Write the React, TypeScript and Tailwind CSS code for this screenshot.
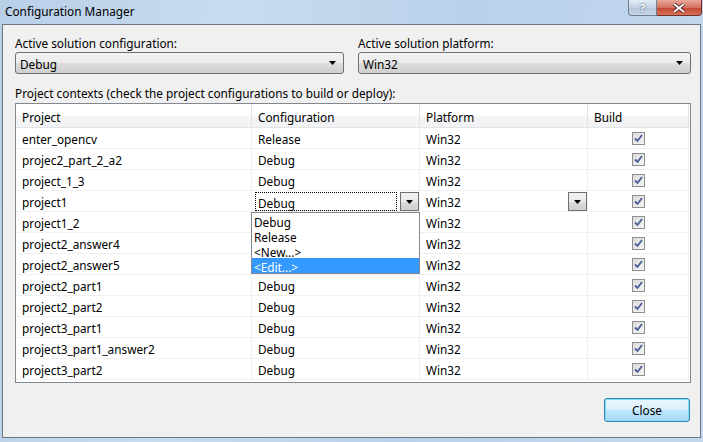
import React from "react";

const rows = [
  { name: "enter_opencv", config: "Release" },
  { name: "projec2_part_2_a2", config: "Debug" },
  { name: "project_1_3", config: "Debug" },
  { name: "project1", config: "Debug", open: true },
  { name: "project1_2", config: "Debug" },
  { name: "project2_answer4", config: "Debug" },
  { name: "project2_answer5", config: "Debug" },
  { name: "project2_part1", config: "Debug" },
  { name: "project2_part2", config: "Debug" },
  { name: "project3_part1", config: "Debug" },
  { name: "project3_part1_answer2", config: "Debug" },
  { name: "project3_part2", config: "Debug" },
];

const Arrow = () => (
  <svg width="7" height="4" viewBox="0 0 7 4">
    <path d="M0 0h7L3.5 4z" fill="#000" />
  </svg>
);

const Combo = ({ value }: { value: string }) => (
  <div className="h-[22px] rounded-[3px] border border-[#707070] bg-[linear-gradient(#f2f2f2_0%,#ebebeb_50%,#dddddd_51%,#cfcfcf_100%)] flex items-center pl-[4px] pr-[7px] justify-between">
    <span className="pt-[1px]">{value}</span>
    <Arrow />
  </div>
);

const DropBtn = () => (
  <div className="absolute top-[1px] left-[148px] w-[19px] h-[19px] border border-[#707070] bg-[linear-gradient(#f2f2f2_0%,#ebebeb_50%,#dddddd_51%,#cfcfcf_100%)] flex items-center justify-center">
    <Arrow />
  </div>
);

const Check = () => (
  <div className="w-[13px] h-[13px] border border-[#8f8f8f] bg-[linear-gradient(135deg,#dcdcdc,#f4f4f4)] flex items-center justify-center">
    <svg width="9" height="9" viewBox="0 0 9 9">
      <path d="M1 4.5l2.5 2.5L8 1" stroke="#4a5e97" strokeWidth="1.8" fill="none" />
    </svg>
  </div>
);

const cell = "h-full border-r border-b border-[#f0f0f0] flex items-center pl-[6px] pt-[2px] relative";

export default function App() {
  return (
    <div className="w-[703px] h-[442px] flex flex-col bg-[linear-gradient(100deg,#b8cfe8_0%,#c8dcf0_30%,#b9d1ea_60%,#c3d8ee_100%)] font-['Noto_Sans',sans-serif] text-[11.8px] text-black leading-[16px] overflow-hidden">
      <div className="h-[24px] flex items-start relative">
        <span className="pl-[5px] pt-[3px]">Configuration Manager</span>
        <div className="absolute right-[1px] top-0 flex">
          <div className="w-[29px] h-[16px] rounded-bl-[4px] border border-t-0 border-[#6f7f92] bg-[linear-gradient(#e3ecf5,#c4d3e3_50%,#b5c6d9_51%,#c9d8e8)] flex items-center justify-center text-[11px] font-bold text-white [text-shadow:0_0_2px_#2a3a50]">
            ?
          </div>
          <div className="w-[45px] h-[16px] rounded-br-[4px] border border-l-0 border-t-0 border-[#6f2f2a] bg-[linear-gradient(#e9a99b,#d4705e_50%,#c24632_51%,#d8705a)] flex items-center justify-center">
            <svg width="12" height="10" viewBox="0 0 12 10">
              <path d="M1 1l10 8M11 1L1 9" stroke="#3a1010" strokeWidth="3.4" />
              <path d="M1 1l10 8M11 1L1 9" stroke="#fff" strokeWidth="2" />
            </svg>
          </div>
        </div>
      </div>
      <div className="mx-[2px] h-[414px] border border-[#6b7784] bg-[#f0f0f0] pl-[12px] pt-[10px]">
        <div className="grid grid-cols-[329px_333px] gap-x-[14px]">
          <div className="h-[17px]">Active solution configuration:</div>
          <div className="h-[17px]">Active solution platform:</div>
          <Combo value="Debug" />
          <Combo value="Win32" />
        </div>
        <div className="mt-[10px] h-[16px] pt-[1px]">Project contexts (check the project configurations to build or deploy):</div>
        <div className="mt-[3px] w-[676px] h-[280px] border border-[#828790] bg-white">
          <div className="grid grid-cols-[236px_168px_168px_101px] h-[24px] bg-[linear-gradient(#ffffff_0%,#ffffff_45%,#f3f4f5_55%,#f1f2f3_100%)]">
            {["Project", "Configuration", "Platform", "Build"].map((h) => (
              <div key={h} className="h-full border-r border-b border-[#e3e4e6] flex items-center pl-[6px] pt-[3px]">
                {h}
              </div>
            ))}
          </div>
          {rows.map((r) => (
            <div key={r.name} className="grid grid-cols-[236px_168px_168px_101px] h-[21px]">
              <div className={cell}>{r.name}</div>
              <div className={cell}>
                {r.open ? (
                  <>
                    <div className="absolute left-[3px] top-[1px] w-[142px] h-[19px] border border-dotted border-black flex items-center pl-[2px] pt-[2px]">
                      {r.config}
                    </div>
                    <DropBtn />
                    <div className="absolute left-[-1px] top-[21px] w-[169px] h-[62px] border border-[#828790] bg-white z-10 flex flex-col">
                      <div className="h-[15px] pl-[2px] pt-[2px] flex items-center">Debug</div>
                      <div className="h-[15px] pl-[2px] pt-[2px] flex items-center">Release</div>
                      <div className="h-[15px] pl-[2px] pt-[2px] flex items-center">&lt;New...&gt;</div>
                      <div className="h-[15px] pl-[2px] pt-[2px] flex items-center bg-[#3399ff] text-white">&lt;Edit...&gt;</div>
                    </div>
                  </>
                ) : (
                  r.config
                )}
              </div>
              <div className={cell}>
                Win32
                {r.open && <DropBtn />}
              </div>
              <div className="h-full border-r border-b border-[#f0f0f0] flex items-center justify-center">
                <Check />
              </div>
            </div>
          ))}
        </div>
        <div className="w-[676px] flex justify-end mt-[15px]">
          <div className="w-[86px] h-[24px] rounded-[3px] border border-[#3c7fb1] bg-[linear-gradient(#eaf6fd_0%,#d9f0fc_50%,#bee6fd_51%,#a7d9f5_100%)] shadow-[inset_0_0_0_1px_#7fe0fb] flex items-center justify-center mr-[1px]">
            Close
          </div>
        </div>
      </div>
    </div>
  );
}
